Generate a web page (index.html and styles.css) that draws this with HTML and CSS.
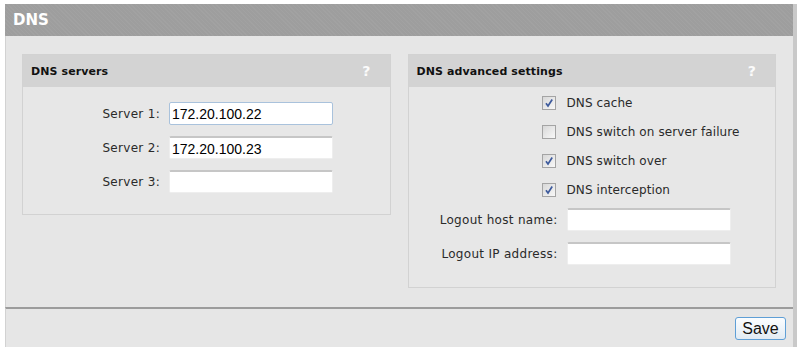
FILE: index.html
```html
<!DOCTYPE html>
<html lang="en">
<head>
    <meta charset="UTF-8">
    <title>DNS</title>
    <link rel="stylesheet" href="styles.css">
</head>
<body>
    <div class="panel">
        <div class="panel-title">DNS</div>

        <div class="panel-body">
            <!-- DNS servers -->
            <div class="box">
                <div class="box-head">
                    <span>DNS servers</span>
                    <span class="help">?</span>
                </div>
                <div class="box-body servers">
                    <div class="row">
                        <label for="srv1">Server 1:</label>
                        <input type="text" id="srv1" class="focused" value="172.20.100.22">
                    </div>
                    <div class="row">
                        <label for="srv2">Server 2:</label>
                        <input type="text" id="srv2" value="172.20.100.23">
                    </div>
                    <div class="row">
                        <label for="srv3">Server 3:</label>
                        <input type="text" id="srv3" value="">
                    </div>
                </div>
            </div>

            <!-- DNS advanced settings -->
            <div class="box">
                <div class="box-head">
                    <span>DNS advanced settings</span>
                    <span class="help">?</span>
                </div>
                <div class="box-body advanced">
                    <div class="check-row">
                        <span class="check on"><svg width="10" height="10" viewBox="0 0 10 10"><path d="M2 5.2 L4 8 L8.2 1.5" fill="none" stroke="#3d5a9c" stroke-width="1.7"/></svg></span>
                        <span>DNS cache</span>
                    </div>
                    <div class="check-row">
                        <span class="check"></span>
                        <span>DNS switch on server failure</span>
                    </div>
                    <div class="check-row">
                        <span class="check on"><svg width="10" height="10" viewBox="0 0 10 10"><path d="M2 5.2 L4 8 L8.2 1.5" fill="none" stroke="#3d5a9c" stroke-width="1.7"/></svg></span>
                        <span>DNS switch over</span>
                    </div>
                    <div class="check-row">
                        <span class="check on"><svg width="10" height="10" viewBox="0 0 10 10"><path d="M2 5.2 L4 8 L8.2 1.5" fill="none" stroke="#3d5a9c" stroke-width="1.7"/></svg></span>
                        <span>DNS interception</span>
                    </div>
                    <div class="row first-input">
                        <label for="host">Logout host name:</label>
                        <input type="text" id="host" value="">
                    </div>
                    <div class="row">
                        <label for="ip">Logout IP address:</label>
                        <input type="text" id="ip" value="">
                    </div>
                </div>
            </div>
        </div>

        <div class="panel-foot">
            <button class="save">Save</button>
        </div>
    </div>
</body>
</html>
```

FILE: styles.css
```css
body {
    margin: 0;
    padding: 4px 0 0 5px;
    background: #fff;
    font-family: 'DejaVu Sans', Verdana, sans-serif;
    font-size: 12px;
    color: #2a2a2a;
}
.panel {
    width: 788px;
    border-right: 4px solid #c9c9c9;
    background: #e6e6e6;
}
.panel-title {
    height: 32px;
    line-height: 32px;
    padding-left: 8px;
    background-color: #9e9e9e;
    background-image: repeating-linear-gradient(45deg, rgba(255,255,255,0.04) 0 1px, transparent 1px 3px);
    color: #fff;
    font-size: 15px;
    font-weight: bold;
}
.panel-body {
    display: grid;
    grid-template-columns: 1fr 1fr;
    gap: 17px;
    align-items: start;
    padding: 18px 17px 19px 16px;
    border-left: 1px solid #d2d2d2;
}
.box {
    border: 1px solid #d2d2d2;
    background: #e7e7e7;
}
.box-head {
    display: flex;
    justify-content: space-between;
    align-items: center;
    height: 32px;
    padding: 0 19px 0 8px;
    background: #d3d3d3;
    font-size: 11px;
    font-weight: bold;
    letter-spacing: 0.1px;
    color: #111;
}
.help {
    color: #fbfbfb;
    font-size: 14px;
    font-weight: bold;
}
.box-body {
    display: flex;
    flex-direction: column;
}
.servers {
    padding: 15px 0 21px;
    gap: 11px;
}
.advanced {
    padding: 1px 0 22px;
}
.row {
    display: flex;
    align-items: center;
    gap: 9px;
}
.row label {
    text-align: right;
    letter-spacing: 0.3px;
}
.servers .row label {
    width: 137px;
}
.advanced .row {
    margin-top: 11px;
}
.advanced .row.first-input {
    margin-top: 4px;
}
.advanced .row label {
    width: 149px;
}
.row input {
    box-sizing: border-box;
    width: 164px;
    height: 23px;
    margin: 0;
    padding: 1px 2px 0;
    border: 1px solid #eeeeee;
    border-top: 2px solid #c6c6c6;
    border-radius: 2px;
    background: #fff;
    font-family: 'Liberation Sans', Arial, sans-serif;
    font-size: 14px;
    color: #000;
    outline: none;
}
.row input.focused {
    border: 1px solid #a9c2dc;
}
.check-row {
    display: flex;
    align-items: center;
    height: 29px;
    padding-left: 133px;
    letter-spacing: 0.1px;
}
.check {
    box-sizing: border-box;
    display: flex;
    align-items: center;
    justify-content: center;
    width: 14px;
    height: 14px;
    margin-right: 11px;
    border: 1px solid #a4a4a4;
    background: linear-gradient(135deg, #d8d8d8, #f8f8f8);
}
.panel-foot {
    display: flex;
    justify-content: flex-end;
    padding: 8px 7px 7px;
    border-top: 2px solid #9c9c9c;
    border-left: 1px solid #d2d2d2;
}
.save {
    width: 51px;
    height: 23px;
    padding: 0;
    border: 1px solid #5f9fd6;
    border-radius: 3px;
    background: linear-gradient(#fbfdff, #e2ebf3);
    font-family: 'Liberation Sans', Arial, sans-serif;
    font-size: 16px;
    color: #111;
}
```
